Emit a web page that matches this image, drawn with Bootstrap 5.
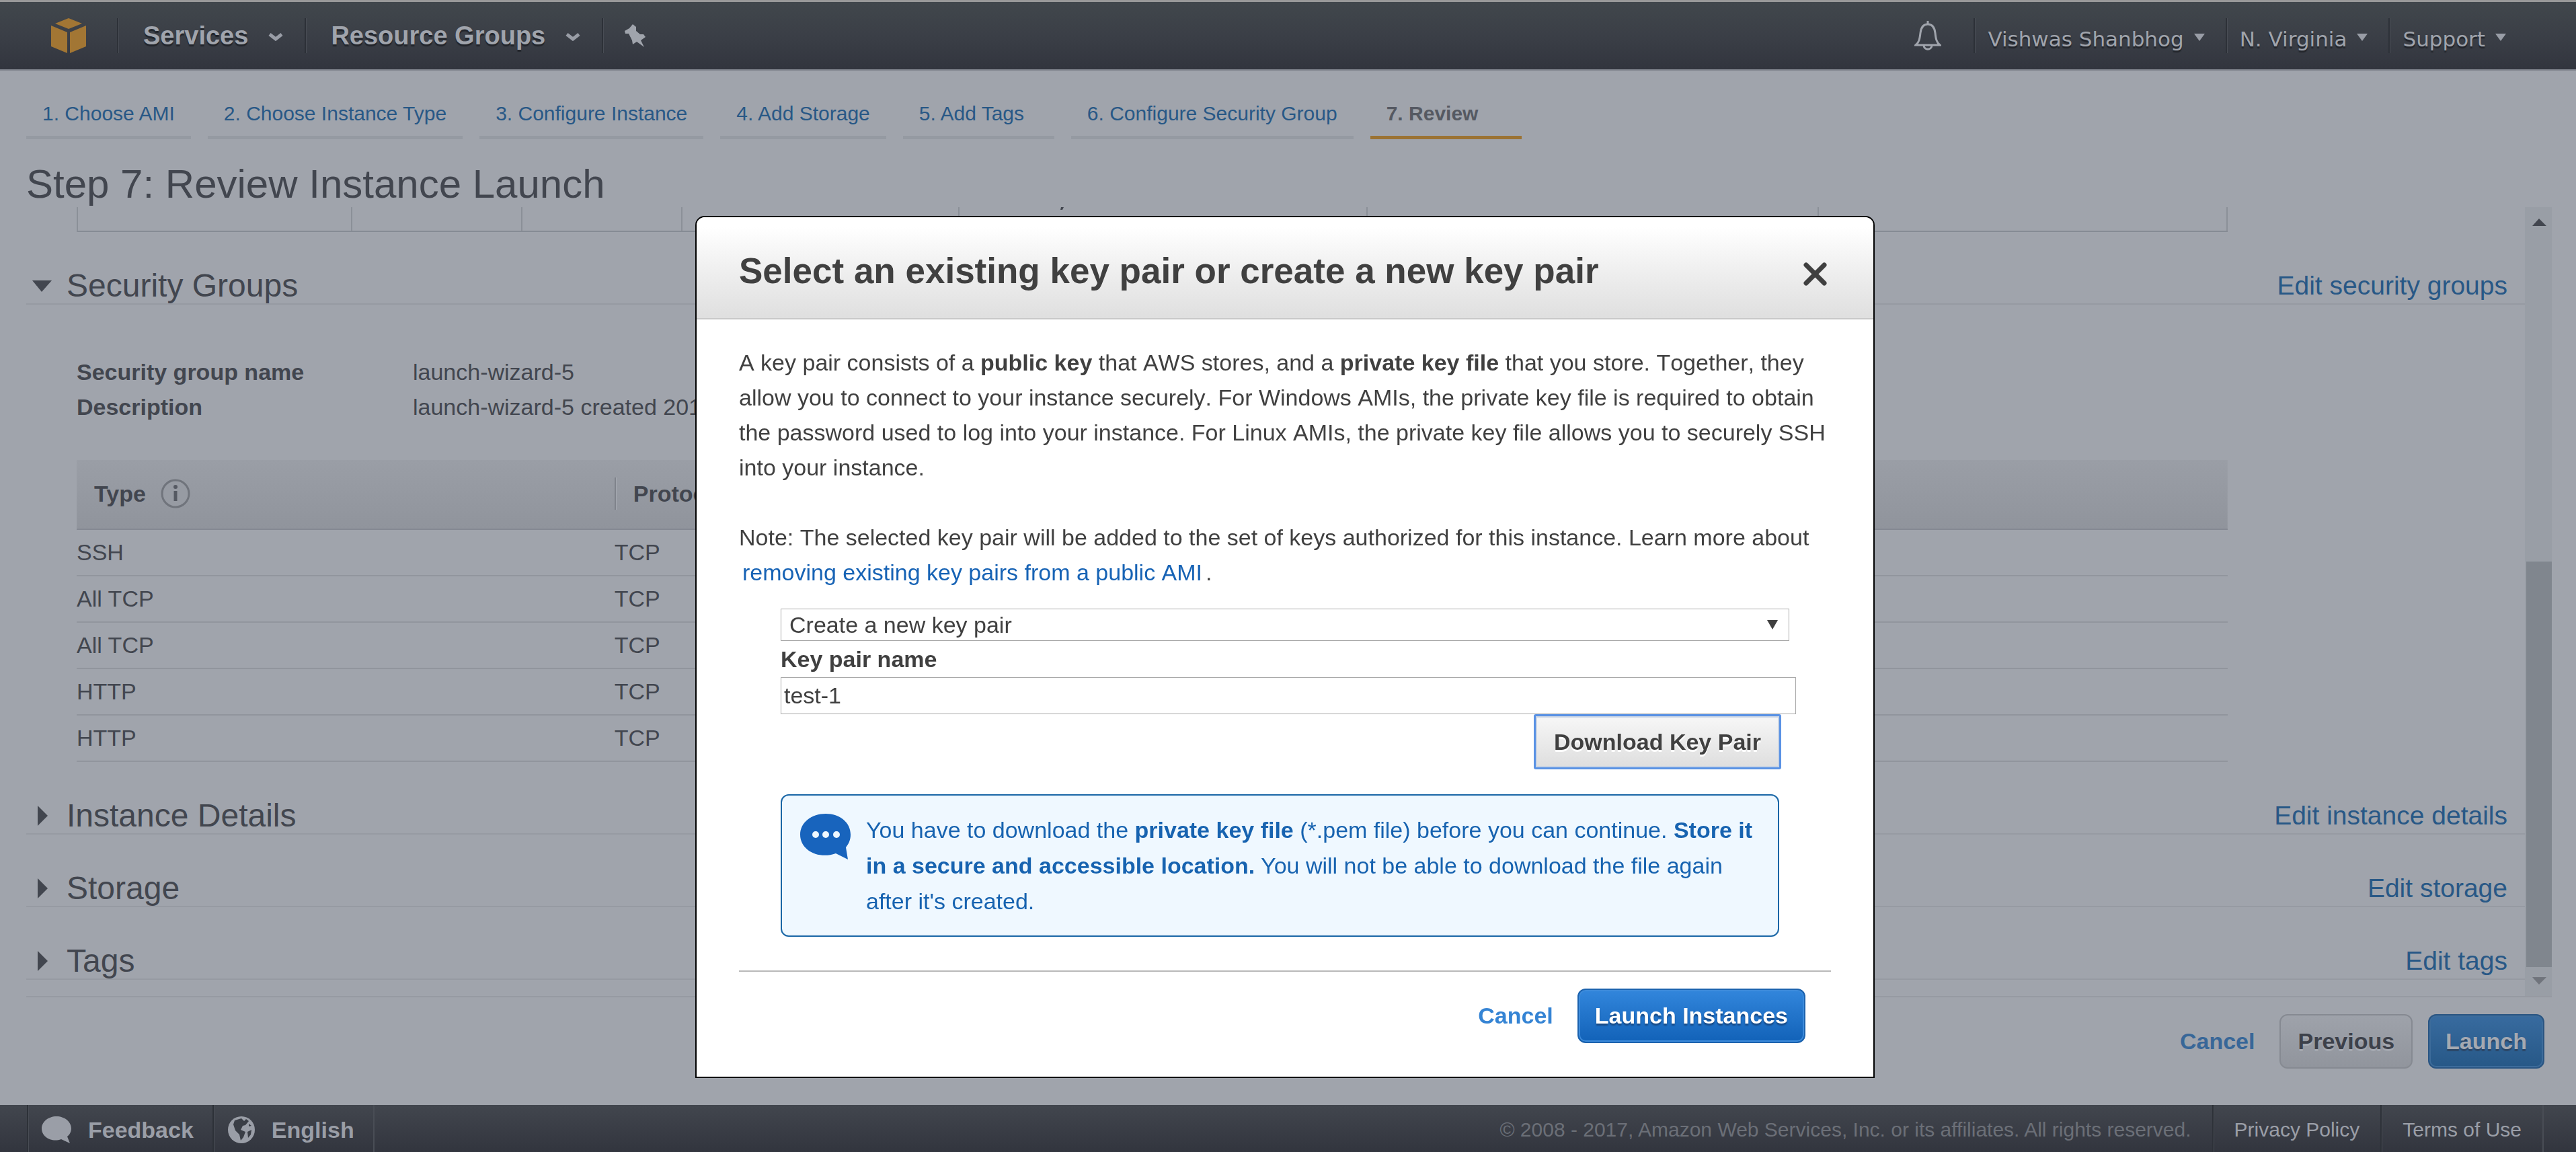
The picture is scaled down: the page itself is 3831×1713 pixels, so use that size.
<!DOCTYPE html>
<html lang="en">
<head>
<meta charset="utf-8">
<meta name="viewport" content="width=device-width, initial-scale=1">
<title>Review Instance Launch</title>
<link href="https://cdn.jsdelivr.net/npm/bootstrap@5.3.0/dist/css/bootstrap.min.css" rel="stylesheet">
<style>
body{font-family:"Liberation Sans",Arial,sans-serif;font-size:34px;line-height:52px;color:#42464f;background:#a0a4ac}
a{text-decoration:none;color:#285886}
svg{display:block;flex:none}
.bar-top{border-top:3px solid #999;border-bottom:2px solid #80848d;background:linear-gradient(#41474c,#3a3e46 55%,#32353e);color:#a0a4ac;padding:24px 104px 24px 76px}
.bar-top a{color:inherit}
.bar-nav{margin-left:46px}
.bar-item{height:52px;border-left:2px solid #2d3138;box-shadow:inset 1px 0 #494d55}
.menu-main{font-size:38px;font-weight:700;padding:0 32px 0 37px;gap:30px;text-shadow:0 3px 1px #22252b}
.menu-side{font-family:"DejaVu Sans",sans-serif;font-size:31px;padding:0 31px 0 19px;gap:15px;text-shadow:0 3px 1px #22252b}
.menu-side span{padding-top:9px}
.menu-main svg,.menu-side svg{margin-top:4px}
.menu-side:last-child{padding-right:0}
.steps{padding:46px 39px 0;gap:25px;font-size:30px;line-height:36px}
.steps a{min-width:225px;padding:0 24px 15px;border-bottom:5px solid #959aa2}
.steps a.current{color:#555962;font-weight:700;border-color:#9b7334}
.page-title{font-size:60px;line-height:66px;margin:34px 39px 1px}
.pane{margin:0 36px 0 39px;border-bottom:2px solid #969aa2}
.pane-main{min-width:0}
.indent{margin:0 442px 0 75px}
.cut-grid{display:grid;grid-template-columns:408fr 253fr 239fr 412fr 607fr 672fr 608fr;height:37px;border-bottom:2px solid #868b94;border-left:2px solid #8b9098}
.cut-grid div{border-right:2px solid #8b9098}
.cut-grid svg{margin-left:150px}
.section-head{padding:54px 26px 0 7px;border-bottom:2px solid #969aa2}
.section-head h2{font-size:48px;line-height:52px;gap:20px}
.section-head a{font-size:39px;line-height:52px}
.facts{padding-top:74px;margin-bottom:53px}
.facts dt{width:500px;flex:none}
.rules{table-layout:fixed;width:100%}
.rules th{height:103px;border-bottom:2px solid #858992;padding:0 0 2px;font-weight:700}
.rules thead tr{background:linear-gradient(#9a9ea6,#90949c)}
.rules td{height:69px;border-bottom:2px solid #91959d;padding:0 0 2px;line-height:52px}
.th-in{padding-left:26px;gap:22px;line-height:48px}
.th-div{border-left:2px solid #7f838b;box-shadow:inset 1px 0 #a5a9b1}
.track{width:40px;flex:none;background:#999ea6;padding:17px 0 17px 2px}
.thumb{height:603px;background:#80868e;margin-bottom:15px}
.actions{padding:25px 47px 52px 0;gap:23px}
.actions .link-btn{margin-right:14px}
.btn-aws{font-size:34px;font-weight:700;line-height:50px;padding:12px 25px 13px;border:2px solid;border-radius:12px;height:81px}
.btn-off{color:#3d414a;background:linear-gradient(#9ea2aa,#91959d);border-color:#868a92;text-shadow:0 3px #a5a9b1}
.btn-off-blue{color:#a5a9b1;background:linear-gradient(#386b9f,#275887);border-color:#2a5582;text-shadow:0 3px 1px #2c4767;box-shadow:inset 0 0 0 2px #3d6c9b;padding-left:24px;padding-right:24px}
.link-btn{font-weight:700;font-size:34px;line-height:52px;color:#386798;padding:0 0 2px;border:0;background:none}
.bar-foot{background:linear-gradient(#42464e,#32353e);color:#9a9ea7;min-height:70px;font-size:30px}
.bar-foot a{color:inherit}
.foot-item{border-left:2px solid #2d3138;box-shadow:inset 1px 0 #494d55;padding:3px 31px 0}
.foot-left{margin-left:40px}
.foot-left .foot-item{font-size:34px;font-weight:700;padding:3px 28px 0 20px;gap:24px}
.foot-right{padding-right:48px}
.foot-copy{color:#6b6f77;padding:3px 31px 0 0}
.foot-end{width:2px;background:#494d55}
.modal{padding-right:9px;overflow:hidden}
.modal-dialog{max-width:1754px;margin:321px auto 0}
.modal-content{border:2px solid #000;border-radius:14px 14px 0 0;color:#404040}
.modal-header{padding:48px 63px 38px;border-bottom:2px solid #c8c8c8;border-radius:12px 12px 0 0;background:linear-gradient(#fff 10%,#f0f0f0 50%,#dfdfdf)}
.modal-title{font-size:53px;line-height:64px;font-weight:700}
.x-btn{border:0;background:none;padding:7px 6px 0 0}
.modal-body{padding:38px 63px 0;font-kerning:none}
.modal-body p{margin-bottom:52px}
.modal-body p + p{margin-bottom:28px}
.modal-body a{color:#1763b5;padding:0 5px}
.key-form{margin-left:62px}
.pick{height:48px;padding:0 40px 0 12px;font-size:34px;line-height:44px;color:#404040;border:1px solid #a8a8a8;border-radius:0;margin-right:62px;width:auto;
background:#fff url("data:image/svg+xml,%3Csvg xmlns='http://www.w3.org/2000/svg' viewBox='0 0 16 14'%3E%3Cpath d='M0 0h16l-8 14z' fill='%23404040'/%3E%3C/svg%3E") no-repeat right 16px center/16px 14px}
.key-form label{line-height:54px;font-weight:700}
.key-name{height:55px;border:1px solid #a8a8a8;border-radius:0;padding:0 4px;font-size:34px;color:#404040;margin-right:52px;width:auto}
.btn-load{margin-right:74px;height:82px;padding:12px 27px;color:#404040;background:linear-gradient(#f7f7f7,#dedede);border:3px solid #5a92e4;border-radius:3px;text-shadow:0 3px #fff;box-shadow:inset 0 0 0 2px #c9d4e4}
.tip{margin:37px 77px 0 0;border:2px solid #1966a6;border-radius:12px;background:#eff8ff;color:#1763b0;padding:25px 20px 24px 27px;gap:22px;line-height:53px;font-kerning:auto}
.tip svg{margin-top:2px}
.modal-footer{margin:50px 63px 0;padding:25px 38px 50px 0;border-top:2px solid #b8b8b8;gap:36px}
.modal-footer > *{margin:0}
.modal-footer .link-btn{color:#3584d4}
.btn-go{color:#fff;background:linear-gradient(#3286dc,#1262b8);border-color:#1b62ae;text-shadow:0 3px 2px #174a86;box-shadow:inset 0 0 0 2px #3d8bdb;padding-left:24px;padding-right:24px}
</style>
</head>
<body class="d-flex flex-column min-vh-100">

<header class="bar-top d-flex align-items-center">
  <a href="#" aria-label="Home"><svg width="52" height="52" viewBox="0 0 52 52" fill="#a27634"><path d="M26 0l20 8-20 8L6 8zM0 11l24 10v31L0 42zM52 11L28 21v31l24-10z"/></svg></a>
  <nav class="bar-nav d-flex flex-grow-1 align-items-center">
    <a href="#" class="bar-item menu-main d-flex align-items-center"><span>Services</span><svg width="22" height="12" viewBox="0 0 22 12" fill="none" stroke="#999da6" stroke-width="5"><path d="M2 2l9 7 9-7"/></svg></a>
    <a href="#" class="bar-item menu-main d-flex align-items-center"><span>Resource Groups</span><svg width="22" height="12" viewBox="0 0 22 12" fill="none" stroke="#999da6" stroke-width="5"><path d="M2 2l9 7 9-7"/></svg></a>
    <a href="#" class="bar-item d-flex align-items-center ps-4" aria-label="Pin"><svg class="ms-2" width="32" height="34" viewBox="0 0 32 34" fill="#a0a4ac"><path d="M12 0L17 4 17 10 23 15 28 15 31 19 24 24 29 34 18 26 12 30 11 24 6 14 1 14 0 10 7 6z"/></svg></a>
    <a href="#" class="ms-auto me-5" aria-label="Notifications"><svg width="40" height="44" viewBox="0 0 40 44" fill="none" stroke="#a0a4ac" stroke-width="3"><path d="M2 36c5-4 6-9 7-18C10 9 14 5 20 5s10 4 11 13c1 9 2 14 7 18zM20 0v5M14 37c1 7 11 7 12 0"/></svg></a>
    <a href="#" class="bar-item menu-side d-flex align-items-center"><span>Vishwas Shanbhog</span><svg width="16" height="11" viewBox="0 0 16 11" fill="#999da6"><path d="M0 0h16L8 11z"/></svg></a>
    <a href="#" class="bar-item menu-side d-flex align-items-center"><span>N. Virginia</span><svg width="16" height="11" viewBox="0 0 16 11" fill="#999da6"><path d="M0 0h16L8 11z"/></svg></a>
    <a href="#" class="bar-item menu-side d-flex align-items-center"><span>Support</span><svg width="16" height="11" viewBox="0 0 16 11" fill="#999da6"><path d="M0 0h16L8 11z"/></svg></a>
  </nav>
</header>

<main class="flex-grow-1">
  <nav class="steps d-flex" aria-label="Wizard steps">
    <a href="#">1. Choose AMI</a>
    <a href="#">2. Choose Instance Type</a>
    <a href="#">3. Configure Instance</a>
    <a href="#">4. Add Storage</a>
    <a href="#">5. Add Tags</a>
    <a href="#">6. Configure Security Group</a>
    <a href="#" class="current" aria-current="step">7. Review</a>
  </nav>
  <h1 class="page-title fw-normal">Step 7: Review Instance Launch</h1>

  <div class="pane d-flex">
    <div class="pane-main flex-grow-1">
      <div class="cut-grid indent"><div></div><div></div><div></div><div></div><div><svg width="5" height="4" viewBox="0 0 5 4" fill="#42464f"><path d="M1 0h4L3 4H0z"/></svg></div><div></div><div></div></div>

      <section>
        <div class="section-head d-flex justify-content-between">
          <h2 class="d-flex align-items-center fw-normal mb-0"><svg width="33" height="17" viewBox="0 0 33 17" fill="#42464f"><path d="M2 0h29L16 17z"/></svg>Security Groups</h2>
          <a href="#">Edit security groups</a>
        </div>
        <dl class="facts indent">
          <div class="d-flex"><dt>Security group name</dt><dd class="mb-0">launch-wizard-5</dd></div>
          <div class="d-flex"><dt>Description</dt><dd class="mb-0">launch-wizard-5 created 2017</dd></div>
        </dl>
        <div class="indent">
          <table class="rules">
            <thead><tr>
              <th scope="col"><div class="th-in d-flex align-items-center">Type <svg width="44" height="44" viewBox="0 0 44 44"><circle cx="22" cy="22" r="20" fill="#979ba3" stroke="#70747c" stroke-width="3"/><path d="M22 18v15" stroke="#555962" stroke-width="5"/><circle cx="22" cy="12" r="3" fill="#555962"/></svg></div></th>
              <th scope="col"><div class="th-in th-div">Protocol</div></th><th></th><th></th>
            </tr></thead>
            <tbody>
              <tr><td>SSH</td><td>TCP</td><td></td><td></td></tr>
              <tr><td>All TCP</td><td>TCP</td><td></td><td></td></tr>
              <tr><td>All TCP</td><td>TCP</td><td></td><td></td></tr>
              <tr><td>HTTP</td><td>TCP</td><td></td><td></td></tr>
              <tr><td>HTTP</td><td>TCP</td><td></td><td></td></tr>
            </tbody>
          </table>
        </div>
      </section>

      <section class="section-head d-flex justify-content-between">
        <h2 class="d-flex align-items-center fw-normal mb-0"><svg width="33" height="30" viewBox="0 0 33 30" fill="#42464f"><path d="M10 0l15 15-15 15z"/></svg>Instance Details</h2>
        <a href="#">Edit instance details</a>
      </section>
      <section class="section-head d-flex justify-content-between">
        <h2 class="d-flex align-items-center fw-normal mb-0"><svg width="33" height="30" viewBox="0 0 33 30" fill="#42464f"><path d="M10 0l15 15-15 15z"/></svg>Storage</h2>
        <a href="#">Edit storage</a>
      </section>
      <section class="section-head d-flex justify-content-between mb-4">
        <h2 class="d-flex align-items-center fw-normal mb-0"><svg width="33" height="30" viewBox="0 0 33 30" fill="#42464f"><path d="M10 0l15 15-15 15z"/></svg>Tags</h2>
        <a href="#">Edit tags</a>
      </section>
    </div>
    <div class="track d-flex flex-column" aria-hidden="true">
      <svg class="mx-auto mb-auto" width="21" height="11" viewBox="0 0 21 11" fill="#42464f"><path d="M0 11h21L10 0z"/></svg>
      <div class="thumb"></div>
      <svg class="mx-auto" width="21" height="11" viewBox="0 0 21 11" fill="#70747c"><path d="M0 0h21L10 11z"/></svg>
    </div>
  </div>

  <div class="actions d-flex justify-content-end align-items-center">
    <button type="button" class="link-btn">Cancel</button>
    <button type="button" class="btn btn-aws btn-off">Previous</button>
    <button type="button" class="btn btn-aws btn-off-blue">Launch</button>
  </div>
</main>

<footer class="bar-foot d-flex align-items-stretch justify-content-between">
  <div class="foot-left d-flex">
    <a href="#" class="foot-item d-flex align-items-center"><svg width="45" height="40" viewBox="0 0 45 40" fill="#9a9ea7"><path d="M22 0c12 0 22 8 22 18 0 5-3 10-6 12l4 10-13-6c-14 5-29-3-29-16C0 8 10 0 22 0z"/></svg>Feedback</a>
    <a href="#" class="foot-item d-flex align-items-center"><svg width="42" height="42" viewBox="0 0 42 42"><circle cx="21" cy="21" r="20" fill="#9a9ea7"/><path d="M11 7l10-3 4 4 3-3 4 3-5 6-4 1-3 6 7 3-3 8-4 5-2-9-6-6-3-9zM30 24l6-3-1 7-4 5zM32 12l4 3-4 1z" fill="#3a3e46"/></svg>English</a>
    <div class="foot-end"></div>
  </div>
  <div class="foot-right d-flex">
    <div class="foot-copy d-flex align-items-center">© 2008 - 2017, Amazon Web Services, Inc. or its affiliates. All rights reserved.</div>
    <a href="#" class="foot-item d-flex align-items-center">Privacy Policy</a>
    <a href="#" class="foot-item d-flex align-items-center">Terms of Use</a>
    <div class="foot-end"></div>
  </div>
</footer>

<div class="modal d-block" tabindex="-1" role="dialog" aria-modal="true" aria-labelledby="keyTitle">
  <div class="modal-dialog">
    <div class="modal-content">
      <div class="modal-header d-flex align-items-center">
        <h2 class="modal-title" id="keyTitle">Select an existing key pair or create a new key pair</h2>
        <button type="button" class="x-btn" aria-label="Close"><svg width="36" height="36" viewBox="0 0 36 36" stroke="#404040" stroke-width="7" stroke-linecap="round"><path d="M5 5l27 27M32 5L5 32"/></svg></button>
      </div>
      <div class="modal-body">
        <p>A key pair consists of a <b>public key</b> that AWS stores, and a <b>private key file</b> that you store. Together, they allow you to connect to your instance securely. For Windows AMIs, the private key file is required to obtain the password used to log into your instance. For Linux AMIs, the private key file allows you to securely SSH into your instance.</p>
        <p>Note: The selected key pair will be added to the set of keys authorized for this instance. Learn more about <a href="#">removing existing key pairs from a public AMI</a>.</p>
        <form class="key-form d-flex flex-column">
          <select class="pick form-select" aria-label="Key pair option"><option>Create a new key pair</option></select>
          <label for="keyName">Key pair name</label>
          <input id="keyName" class="key-name form-control" type="text" value="test-1">
          <button type="button" class="btn btn-aws btn-load align-self-end">Download Key Pair</button>
          <div class="tip d-flex align-items-start" role="note">
            <svg width="76" height="68" viewBox="0 0 76 68"><path d="M38 0c21 0 37 13 37 31 0 8-3 14-7 19l3 18-18-9C28 68 0 55 0 31 0 13 17 0 38 0z" fill="#1864bd"/><g fill="#eff8ff"><circle cx="23" cy="31" r="5"/><circle cx="38" cy="31" r="5"/><circle cx="54" cy="31" r="5"/></g></svg>
            <div>You have to download the <b>private key file</b> (*.pem file) before you can continue. <b>Store it in a secure and accessible location.</b> You will not be able to download the file again after it's created.</div>
          </div>
        </form>
      </div>
      <div class="modal-footer">
        <button type="button" class="link-btn">Cancel</button>
        <button type="button" class="btn btn-aws btn-go">Launch Instances</button>
      </div>
    </div>
  </div>
</div>

<script src="https://cdn.jsdelivr.net/npm/bootstrap@5.3.0/dist/js/bootstrap.bundle.min.js"></script>
</body>
</html>
